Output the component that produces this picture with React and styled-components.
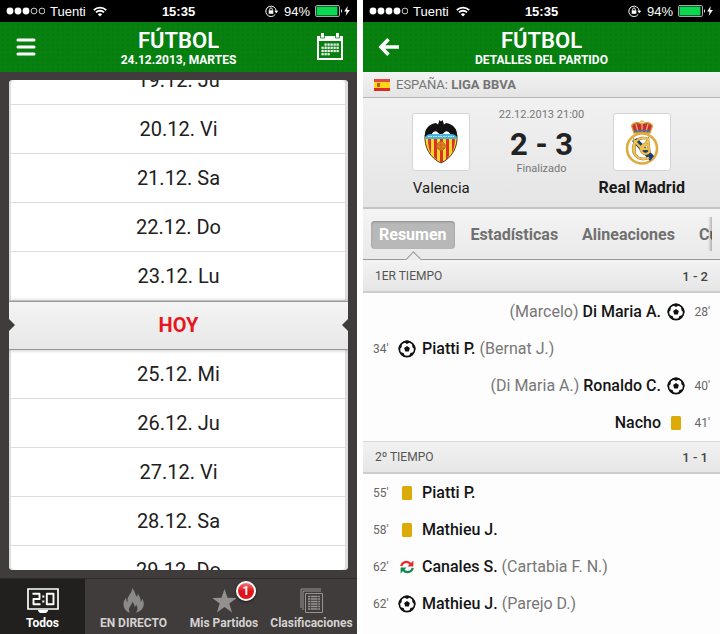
import React, { useState } from 'react';
import styled, { createGlobalStyle } from 'styled-components';

const days = [
  '19.12. Ju',
  '20.12. Vi',
  '21.12. Sa',
  '22.12. Do',
  '23.12. Lu',
  'HOY',
  '25.12. Mi',
  '26.12. Ju',
  '27.12. Vi',
  '28.12. Sa',
  '29.12. Do'
];

const periods = [
  {
    name: '1ER TIEMPO',
    score: '1 - 2',
    events: [
      { minute: 28, type: 'goal', player: 'Di Maria A.', other: 'Marcelo', away: true },
      { minute: 34, type: 'goal', player: 'Piatti P.', other: 'Bernat J.' },
      { minute: 40, type: 'goal', player: 'Ronaldo C.', other: 'Di Maria A.', away: true },
      { minute: 41, type: 'card', player: 'Nacho', away: true }
    ]
  },
  {
    name: '2º TIEMPO',
    score: '1 - 1',
    events: [
      { minute: 55, type: 'card', player: 'Piatti P.' },
      { minute: 58, type: 'card', player: 'Mathieu J.' },
      { minute: 62, type: 'sub', player: 'Canales S.', other: 'Cartabia F. N.' },
      { minute: 62, type: 'goal', player: 'Mathieu J.', other: 'Parejo D.' },
      { minute: 68, type: 'card', player: 'Arbeloa A.', away: true }
    ]
  }
];

const StatusBar = ({ signal }) => (
  <Status>
    <StatusSide>
      <svg width="39" height="8" viewBox="0 0 39 8">
        {[0, 1, 2, 3, 4].map(i => (
          <circle
            key={i}
            cx={4 + i * 8}
            cy="4"
            r={i < signal ? 3.4 : 2.9}
            fill={i < signal ? '#fff' : 'none'}
            stroke="#fff"
            strokeWidth={i < signal ? 0 : 0.8}
          />
        ))}
      </svg>
      <Carrier>Tuenti</Carrier>
      <svg width="14" height="11" viewBox="0 0 14 11" fill="none" stroke="#fff" strokeWidth="1.8">
        <path d="M.8 4.1a8.8 8.8 0 0 1 12.4 0M3 6.4a5.7 5.7 0 0 1 8 0" />
        <path d="M7 10.6 4.8 8.3a3.1 3.1 0 0 1 4.4 0z" fill="#fff" stroke="none" />
      </svg>
    </StatusSide>
    <Clock>15:35</Clock>
    <StatusSide $end>
      <svg width="14" height="12" viewBox="0 0 14 12" fill="none" stroke="#fff">
        <path d="M10.3 9.3A5.2 5.2 0 1 1 11.2 6" />
        <path d="m9.3 5.8 2 2.4 2-2.4z" fill="#fff" stroke="none" />
        <path d="M3.7 5.3h4.6v3.5H3.7z" fill="#fff" stroke="none" />
        <path d="M4.7 5.5V4.2a1.3 1.3 0 0 1 2.6 0v1.3" strokeWidth=".9" />
      </svg>
      <span>94%</span>
      <svg width="36" height="12" viewBox="0 0 36 12">
        <rect x=".5" y=".5" width="24" height="11" rx="1.5" fill="none" stroke="#aaa" />
        <rect x="1.5" y="1.5" width="21" height="9" rx=".5" fill="#0bd750" />
        <path d="M26 4q2 2 0 4z" fill="#fff" />
        <path d="M32.7 1 29.2 6.500h2.400l-1 4.500 4.300-6h-2.700z" fill="#fff" />
      </svg>
    </StatusSide>
  </Status>
);

const BallIcon = () => (
  <svg width="18" height="18" viewBox="0 0 18 18">
    <circle cx="9" cy="9" r="7.700" fill="#fff" stroke="#111" strokeWidth="1.700" />
    <path d="m9 6 2.900 2.100-1.100 3.400H7.200L6.100 8.100z" fill="#111" />
    <path
      d="M5 1.800 9 4l4-2.200Q9-.7 5 1.800zM14.200 3.500l.2 3.800 3 2.500q.6-3.800-3.200-6.300zM16.200 12.100l-3.800.9-1.500 3.800q3.900-.7 5.300-4.700zM1.800 12.100l3.800.9 1.500 3.800q-3.900-.7-5.300-4.700zM3.800 3.500l-.2 3.800-3 2.500Q0 6 3.800 3.500z"
      fill="#111"
    />
  </svg>
);

const CardIcon = () => (
  <svg width="18" height="18" viewBox="0 0 18 18">
    <rect x="4" y="2" width="10" height="14" rx="1.5" fill="#dcab08" />
  </svg>
);

const SubIcon = () => (
  <svg width="18" height="18" viewBox="0 0 18 18" fill="none" strokeWidth="2.2">
    <path d="M3.3 8.2C4 3.8 9.8 2.4 12.6 6" stroke="#e8292c" />
    <path d="M15.4 2.6v6H9.5z" fill="#e8292c" />
    <path d="M14.7 9.8c-.7 4.4-6.5 5.8-9.3 2.2" stroke="#118a50" />
    <path d="M2.6 15.4v-6h5.9z" fill="#118a50" />
  </svg>
);

const eventIcons = { goal: BallIcon, card: CardIcon, sub: SubIcon };

const CalendarIcon = () => (
  <svg width="26" height="28" viewBox="0 0 26 28">
    <path d="M1 4h24v22H1z" fill="none" stroke="#fff" strokeWidth="2" />
    <path d="M0 3h26v5H0zM4 0h3v4H4zM19 0h3v4h-3z" fill="#fff" />
    <path d="M3.500 1v4h4V1M18.500 1v4h4V1" fill="none" stroke="#07800f" strokeWidth=".8" />
    <g fill="#fff">
      {[0, 1, 2, 3].map(row =>
        [0, 1, 2, 3, 4, 5].map(col =>
          (row === 0 && col === 0) || (row === 3 && col > 2) ? null : (
            <rect key={`${row}-${col}`} x={4.5 + col * 3} y={10.5 + row * 3.2} width="2.2" height="2.2" />
          )
        )
      )}
    </g>
  </svg>
);

const ScoreIcon = () => (
  <svg width="32" height="25" viewBox="0 0 32 25" fill="none" stroke="#fff">
    <path d="M1 1h30v20H1z" strokeWidth="1.700" />
    <path d="M11 22h10v1l-2 2h-6l-2-2z" fill="#fff" stroke="none" />
    <g strokeWidth="1.900">
      <path d="M5.500 5.800h7V11h-6v5.300h7M19.800 5.800h6.700v10.500h-6.700z" strokeLinejoin="round" />
      <path d="M15.300 8.500h2M15.300 13.500h2" strokeWidth="2" />
    </g>
  </svg>
);

const FlameIcon = () => (
  <svg width="22" height="25" viewBox="0 0 22 25">
    <path
      d="M9 0c1 4.500-4.500 7-4.500 12 0 1 .3 2 .7 2.500C3.500 13.500 3 11.500 3.300 9.500 1 12 0 14.500.7 18c.7 3.500 3.300 6 6.300 6.800-1.500-2-1.500-4.300 0-6.300 1-1.400 2-2.600 2.100-4.700 2 1.600 2.600 3.300 2.300 5.200 1-.5 1.600-1.400 1.800-2.500 1.800 3 1.800 6-.7 8.300 4-.8 7.300-3.300 8.100-7 .6-3-.4-5.500-1.500-7.200 0 1.500-.5 2.700-1.500 3.400.5-4-1.600-6-2.700-8.300-.6 1-.8 2-.5 3.200C11.700 7.500 12.500 3 9 0z"
      fill="#8b8989"
    />
  </svg>
);

const StarIcon = () => (
  <svg width="25" height="24" viewBox="0 0 25 24">
    <path d="m12.500 0 3 8.800 9.300.1-7.500 5.600 2.800 9-7.600-5.400-7.600 5.400 2.800-9L.2 8.900l9.300-.1z" fill="#929090" />
  </svg>
);

const TableIcon = () => (
  <svg width="24" height="25" viewBox="0 0 24 25" fill="none" stroke="#959393">
    <path d="M1 20V1h20" />
    <path d="M3 22V3h18" />
    <path d="M5.500 5.500h17v19h-17z" />
    <path
      d="M8 8.500h12M8 11h12M8 13.500h12M8 16h12M8 18.500h12M8 21h12"
      strokeDasharray="2 .6 7 .6 2"
      strokeWidth="1.300"
    />
  </svg>
);

const Flag = () => (
  <svg width="16" height="12" viewBox="0 0 16 12">
    <path d="M0 0h16v12H0z" fill="#dc2b20" />
    <path d="M0 3h16v6H0z" fill="#ffd51c" />
    <path d="M3 4h3v3.500q-1.500 1-3 0z" fill="#bd5a1e" />
    <path d="M0 0h16v3H0z" fill="#fff" opacity=".15" />
  </svg>
);

const ValenciaCrest = () => (
  <svg width="34" height="44" viewBox="0 0 34 44">
    <path d="M1 15C0 27 6 38 17 43 28 38 34 27 33 15z" fill="#fbd829" stroke="#4d3a27" />
    <path
      d="M4 18h3v16q-3-6-3-16zM10 18h3v22l-3-3zM16 18h3v24h-3zM22 18h3v18l-3 4zM28 18h3q0 9-3 15z"
      fill="#dc302a"
    />
    <path d="M1.500 14h31v5h-31z" fill="#45b5df" />
    <path d="M4 16.500h26" stroke="#d8f2fb" strokeDasharray="1.500 1" />
    <path
      d="M1 17C0 9 5 4 12 3l2 1.500L15.500 0 17 1.500 18.500 0 20 4.500 22 3c7 1 12 6 11 14-1-2-4-3.500-7-3-2-3-4-3-6-1l-3 2-3-2c-2-2-4-2-6 1-3-.5-6 1-7 3z"
      fill="#111"
    />
    <path d="M8 14c2-3 4-3 6-1l3 2 3-2c2-2 4-2 6 1z" fill="#fff" />
    <circle cx="17" cy="26" r="4.300" fill="#e28b20" stroke="#ac6620" strokeWidth=".8" />
    <path d="M13 25h8M13.500 28h7M17 22v8" stroke="#ba5c1c" strokeWidth=".7" />
  </svg>
);

const MadridCrest = () => (
  <svg width="34" height="46" viewBox="0 0 34 46" fill="none">
    <path d="M9 14 6.500 7C8 3 13 3 17 5c4-2 9-2 10.500 2L25 14z" fill="#c92e38" stroke="#d6a33c" strokeWidth="1.300" />
    <path d="M17 1v12M15 2.500h4M11 5l2 8M23 5l-2 8" stroke="#e7bd57" strokeWidth="1.200" />
    <path d="M9 12.500q8-2 16 0" stroke="#387cae" strokeWidth="1.500" />
    <circle cx="17" cy="29.500" r="15" fill="#fff" stroke="#dfaa3f" strokeWidth="2.600" />
    <path d="m7 22 5-3 17 18-4 5z" fill="#173a7a" />
    <path
      d="M24 20.500a10.500 10.500 0 1 0 0 18M9.500 34V22l7.500 8 6-9 1.500 13M23 26c-6-2-9 3-6 7 2 3 6 2 7 0M16 30h7"
      stroke="#8e6a25"
      strokeWidth="2.600"
    />
    <path
      d="M24 20.500a10.500 10.500 0 1 0 0 18M9.500 34V22l7.500 8 6-9 1.500 13M23 26c-6-2-9 3-6 7 2 3 6 2 7 0M16 30h7"
      stroke="#edc352"
      strokeWidth="1.900"
    />
  </svg>
);

const MatchEvent = ({ event }) => {
  const Icon = eventIcons[event.type];
  return (
    <EventRow $away={event.away}>
      <Minute $away={event.away}>{event.minute}'</Minute>
      <Icon />
      <Names $away={event.away}>
        <strong>{event.player}</strong>
        {event.other && <Other>({event.other})</Other>}
      </Names>
    </EventRow>
  );
};

const CalendarScreen = () => {
  const [selectedDay, setSelectedDay] = useState('HOY');

  return (
    <Screen>
      <StatusBar signal={3} />
      <Header>
        <IconButton aria-label="Menú">
          <svg width="24" height="18" viewBox="0 0 24 18" stroke="#fff" strokeWidth="3" strokeLinecap="round">
            <path d="M4 2h16M4 9h16M4 16h16" />
          </svg>
        </IconButton>
        <Heading>
          <Title>FÚTBOL</Title>
          <Subtitle>24.12.2013, MARTES</Subtitle>
        </Heading>
        <IconButton aria-label="Calendario" $end>
          <CalendarIcon />
        </IconButton>
      </Header>
      <PickerArea>
        <Picker>
          {days.map(day => (
            <Day key={day} $today={day === 'HOY'} aria-pressed={day === selectedDay} onClick={() => setSelectedDay(day)}>
              {day}
            </Day>
          ))}
        </Picker>
      </PickerArea>
      <BottomNav>
        <NavButton $active>
          <ScoreIcon />
          Todos
        </NavButton>
        <NavButton>
          <FlameIcon />
          EN DIRECTO
        </NavButton>
        <NavButton>
          <StarIcon />
          Mis Partidos
          <Badge>1</Badge>
        </NavButton>
        <NavButton>
          <TableIcon />
          Clasificaciones
        </NavButton>
      </BottomNav>
    </Screen>
  );
};

const MatchScreen = () => {
  const [activeTab, setActiveTab] = useState('Resumen');

  return (
    <Screen $light>
      <StatusBar signal={4} />
      <Header>
        <IconButton aria-label="Volver">
          <svg width="24" height="18" viewBox="0 0 24 18" fill="none" stroke="#fff" strokeWidth="3.600">
            <path d="M3.500 9H22M11.500 1.300 4 9l7.500 7.700" />
          </svg>
        </IconButton>
        <Heading>
          <Title>FÚTBOL</Title>
          <Subtitle>DETALLES DEL PARTIDO</Subtitle>
        </Heading>
      </Header>
      <League>
        <Flag />
        <span>
          ESPAÑA: <strong>LIGA BBVA</strong>
        </span>
      </League>
      <Match>
        <Team>
          <Crest>
            <ValenciaCrest />
          </Crest>
          <TeamName>Valencia</TeamName>
        </Team>
        <Result>
          <Small>22.12.2013 21:00</Small>
          <Score>2 - 3</Score>
          <Small>Finalizado</Small>
        </Result>
        <Team>
          <Crest>
            <MadridCrest />
          </Crest>
          <TeamName $winner>Real Madrid</TeamName>
        </Team>
      </Match>
      <TabBar>
        <Tabs>
          {['Resumen', 'Estadísticas', 'Alineaciones', 'Cuotas'].map(tab => (
            <Tab key={tab} $active={tab === activeTab} onClick={() => setActiveTab(tab)}>
              {tab}
            </Tab>
          ))}
        </Tabs>
      </TabBar>
      {periods.map(period => (
        <section key={period.name}>
          <PeriodHeader>
            <span>{period.name}</span>
            <PeriodScore>{period.score}</PeriodScore>
          </PeriodHeader>
          {period.events.map((event, i) => (
            <MatchEvent key={i} event={event} />
          ))}
        </section>
      ))}
    </Screen>
  );
};

const App = () => (
  <>
    <GlobalStyle />
    <Page>
      <CalendarScreen />
      <MatchScreen />
    </Page>
  </>
);

// Styled components
const GlobalStyle = createGlobalStyle`
  * {
    box-sizing: border-box;
  }

  body {
    margin: 0;
    background: #fff;
    font-family: Roboto, 'Liberation Sans', sans-serif;
  }

  button {
    margin: 0;
    padding: 0;
    border: none;
    background: none;
    font-family: inherit;
    cursor: pointer;
  }

  svg {
    display: block;
    flex-shrink: 0;
  }
`;

const Page = styled.main`
  display: grid;
  grid-template-columns: minmax(0, 1fr) minmax(0, 1fr);
  gap: 6px;
  height: 100vh;
`;

const Screen = styled.div`
  display: flex;
  flex-direction: column;
  min-height: 0;
  overflow: hidden;
  background: ${props => (props.$light ? '#fdfdfd' : '#403c3b')};

  > * {
    flex-shrink: 0;
  }
`;

const Status = styled.div`
  display: grid;
  grid-template-columns: 1fr auto 1fr;
  align-items: center;
  height: 22px;
  padding: 0 6px;
  background: #000;
  color: #fff;
  font-family: 'Liberation Sans', sans-serif;
  font-size: 13px;
`;

const StatusSide = styled.div`
  display: flex;
  align-items: center;
  justify-content: ${props => (props.$end ? 'flex-end' : 'flex-start')};
  gap: 5px;
`;

const Carrier = styled.span`
  margin-right: 2px;
`;

const Clock = styled.span`
  font-weight: 700;
`;

const Header = styled.header`
  display: grid;
  grid-template-columns: 44px 1fr 44px;
  align-items: center;
  height: 50px;
  padding: 0 14px;
  background: radial-gradient(#057a0e 1px, transparent 1px) 0 0 / 5px 5px, #07800f;
  color: #fff;
`;

const IconButton = styled.button`
  justify-self: ${props => (props.$end ? 'end' : 'start')};
`;

const Heading = styled.div`
  display: flex;
  flex-direction: column;
  align-items: center;
  padding-top: 1px;
`;

const Title = styled.h1`
  margin: 0;
  font-size: 22px;
  line-height: 24px;
  font-weight: 600;
`;

const Subtitle = styled.div`
  font-size: 12px;
  line-height: 14px;
  font-weight: 700;
  white-space: nowrap;
`;

const PickerArea = styled.div`
  display: flex;
  flex: 1 1 0;
  min-height: 0;
  padding: 8px 9px;
`;

const Picker = styled.div`
  position: relative;
  display: flex;
  flex: 1;
  flex-direction: column;
  justify-content: center;
  overflow: hidden;
  border-radius: 4px;
  background: #fff;
  box-shadow: inset 2px 0 #ddd, inset -3px 0 #ddd;

  &::before,
  &::after {
    content: '';
    position: absolute;
    top: 50%;
    z-index: 1;
    border: 6px solid transparent;
    transform: translateY(-50%);
  }

  &::before {
    left: 0;
    border-right: 0;
    border-left-color: #403c3b;
  }

  &::after {
    right: 0;
    border-left: 0;
    border-right-color: #403c3b;
  }
`;

const Day = styled.button`
  flex: 0 0 49px;
  border-bottom: 1px solid #ddd;
  color: ${props => (props.$today ? '#e7171d' : '#202020')};
  font-size: 20px;
  font-weight: ${props => (props.$today ? 700 : 400)};

  ${props =>
    props.$today &&
    `
    border-top: 1px solid #999;
    border-bottom-color: #999;
    background: linear-gradient(#f4f4f4, #e7e7e7);
    box-shadow: 0 0 4px rgba(0, 0, 0, 0.3);
  `}
`;

const BottomNav = styled.nav`
  display: grid;
  grid-template-columns: 85fr 97fr 84fr 91fr;
  height: 56px;
  border-top: 1px solid #2d2a29;
  background: #403c3b;
`;

const NavButton = styled.button`
  position: relative;
  display: flex;
  flex-direction: column;
  align-items: center;
  justify-content: flex-end;
  gap: 3px;
  min-width: 0;
  padding-bottom: 3px;
  background: ${props => (props.$active ? '#21201e' : 'transparent')};
  color: ${props => (props.$active ? '#fff' : '#d4d2d1')};
  font-size: 12px;
  line-height: 15px;
  font-weight: 700;
  white-space: nowrap;
`;

const Badge = styled.span`
  position: absolute;
  top: 2px;
  left: calc(50% + 12px);
  width: 20px;
  height: 20px;
  border: 2px solid #fff;
  border-radius: 50%;
  background: linear-gradient(#f4777b, #e0141b 50%);
  box-shadow: 0 1px 3px rgba(0, 0, 0, 0.6);
  color: #fff;
  font-size: 12px;
  line-height: 16px;
`;

const League = styled.div`
  display: flex;
  align-items: center;
  gap: 6px;
  height: 26px;
  padding: 0 11px;
  border-bottom: 1px solid #b8b8b8;
  background: linear-gradient(#f3f3f3, #e4e4e4);
  color: #757575;
  font-size: 13px;
`;

const Match = styled.div`
  display: grid;
  grid-template-columns: 1fr 90px 1fr;
  height: 111px;
  padding: 10px 23px 0;
  border-bottom: 2px solid #c4c4c4;
  background: linear-gradient(#f1f1f1, #e5e5e5);
`;

const Team = styled.div`
  display: flex;
  flex-direction: column;
  align-items: center;
  padding-top: 5px;
`;

const Crest = styled.div`
  display: flex;
  align-items: center;
  justify-content: center;
  width: 58px;
  height: 58px;
  border: 1px solid #d5d5d5;
  border-radius: 3px;
  background: #fff;
`;

const TeamName = styled.div`
  margin-top: 8px;
  color: #1a1a1a;
  font-size: ${props => (props.$winner ? '16px' : '15px')};
  line-height: 18px;
  font-weight: ${props => (props.$winner ? 700 : 400)};
`;

const Result = styled.div`
  display: flex;
  flex-direction: column;
  align-items: center;
  white-space: nowrap;
`;

const Small = styled.div`
  color: #777;
  font-size: 11px;
  line-height: 14px;
`;

const Score = styled.div`
  margin: 6px 0 0;
  color: #222;
  font-size: 31px;
  line-height: 34px;
  font-weight: 700;
`;

const TabBar = styled.nav`
  height: 51px;
  padding: 0 8px;
  background: linear-gradient(#f4f4f4, #e9e9e9);
  box-shadow: inset 0 -1px #999;
`;

const Tabs = styled.div`
  position: relative;
  display: flex;
  align-items: center;
  gap: 8px;
  height: 100%;
  overflow: hidden;

  &::after {
    content: '';
    position: absolute;
    top: 8px;
    right: 0;
    width: 4px;
    height: 34px;
    background: linear-gradient(to right, transparent, rgba(0, 0, 0, 0.25));
  }
`;

const Tab = styled.button`
  position: relative;
  flex-shrink: 0;
  height: 28px;
  padding: 0 8px;
  border-radius: 4px;
  background: ${props => (props.$active ? '#b8b8b8' : 'transparent')};
  box-shadow: ${props => (props.$active ? 'inset 0 1px 2px #8c8c8c' : 'none')};
  color: ${props => (props.$active ? '#fff' : '#707070')};
  font-size: 16px;
  font-weight: 700;

  &::after {
    content: '';
    display: ${props => (props.$active ? 'block' : 'none')};
    position: absolute;
    top: 33px;
    left: calc(50% - 6px);
    width: 12px;
    height: 12px;
    border: solid #999;
    border-width: 1px 0 0 1px;
    background: #ededed;
    transform: rotate(45deg);
  }
`;

const PeriodHeader = styled.div`
  display: flex;
  align-items: center;
  justify-content: space-between;
  height: 33px;
  padding: 0 12px;
  border-top: 1px solid #d8d8d8;
  border-bottom: 2px solid #cdcdcd;
  background: linear-gradient(#f2f2f2, #e6e6e6);
  color: #555;
  font-size: 12px;

  ${TabBar} + section & {
    border-top-color: #f2f2f2;
  }
`;

const PeriodScore = styled.span`
  color: #444;
  font-size: 13px;
  font-weight: 500;
`;

const EventRow = styled.div`
  display: flex;
  flex-direction: ${props => (props.$away ? 'row-reverse' : 'row')};
  align-items: center;
  height: 37px;
  padding: 0 10px;
`;

const Minute = styled.span`
  width: 25px;
  color: #666;
  font-size: 12px;
  text-align: ${props => (props.$away ? 'right' : 'left')};
`;

const Names = styled.div`
  display: flex;
  flex-direction: ${props => (props.$away ? 'row-reverse' : 'row')};
  gap: 4px;
  padding: 0 6px;
  color: #151515;
  font-size: 16px;

  strong {
    font-weight: 500;
  }
`;

const Other = styled.span`
  color: #777;
`;

export default App;
